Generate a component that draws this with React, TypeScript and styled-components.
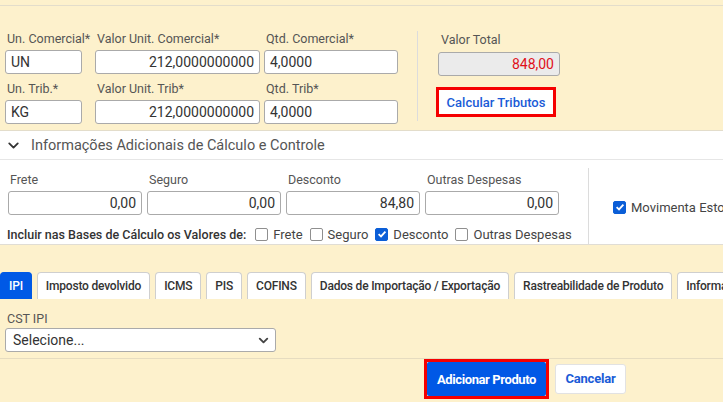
import React from "react";
import styled, { createGlobalStyle } from "styled-components";
import { ChevronDown } from "lucide-react";

const GlobalStyle = createGlobalStyle`
  body {
    margin: 0;
    font-family: Roboto, "Liberation Sans", Arial, sans-serif;
    background: #fdf1cc;
    overflow: hidden;
  }
  * { box-sizing: border-box; }
`;

const Page = styled.div`
  width: 723px;
  height: 402px;
  overflow: hidden;
  background: #fdf1cc;
  padding-top: 5px;
`;

const TopSection = styled.div`
  display: flex;
  border-top: 1px solid #e3ddcb;
  padding: 24px 0 6px 5px;
`;

const FieldGrid = styled.div<{ $cols: string; $gap?: number }>`
  display: grid;
  grid-template-columns: ${(p) => p.$cols};
  column-gap: ${(p) => p.$gap ?? 0}px;
  row-gap: 6px;
`;

const Field = styled.div`
  display: flex;
  flex-direction: column;
`;

const Label = styled.label`
  font-size: 12.5px;
  line-height: 18px;
  color: #555;
  padding-left: 2px;
  margin-bottom: 2px;
  white-space: nowrap;
`;

const Input = styled.div<{ $w?: number; $right?: boolean; $readonly?: boolean }>`
  width: ${(p) => (p.$w ? `${p.$w}px` : "100%")};
  height: 24px;
  border: 1px solid #aaa;
  border-radius: 3px;
  background: ${(p) => (p.$readonly ? "#ebebeb" : "#fff")};
  color: ${(p) => (p.$readonly ? "#e0101a" : "#333")};
  font-size: 14px;
  line-height: 22px;
  padding: 0 5px;
  text-align: ${(p) => (p.$right ? "right" : "left")};
  white-space: nowrap;
  overflow: hidden;
`;

const VLine = styled.div<{ $ml: number; $h: number; $mt: number }>`
  width: 1px;
  background: #dcdcdc;
  margin-left: ${(p) => p.$ml}px;
  margin-top: ${(p) => p.$mt}px;
  height: ${(p) => p.$h}px;
  flex-shrink: 0;
`;

const TotalBlock = styled.div`
  display: flex;
  flex-direction: column;
  align-items: flex-start;
  padding-left: 20px;
`;

const TotalLabel = styled(Label)`
  margin-top: 1px;
  padding-left: 3px;
  margin-bottom: 3px;
`;

const Highlight = styled.div<{ $ml?: number; $mt?: number }>`
  border: 3px solid #f50000;
  margin-left: ${(p) => p.$ml ?? 0}px;
  margin-top: ${(p) => p.$mt ?? 0}px;
  display: flex;
`;

const LinkButton = styled.button`
  border: none;
  background: #fff;
  color: #1a5bd7;
  font-family: inherit;
  font-size: 13px;
  font-weight: 500;
  height: 24px;
  width: 114px;
  padding: 0;
`;

const WhiteSection = styled.div`
  background: #fff;
  border-top: 1px solid #e3ddcb;
  border-bottom: 1px solid #e0ddd5;
  width: 760px;
`;

const SectionHeader = styled.div`
  height: 29px;
  display: flex;
  align-items: center;
  gap: 9px;
  padding-left: 5px;
  font-size: 14.5px;
  color: #555;
  border-bottom: 1px solid #e6e6e6;
`;

const SectionBody = styled.div`
  display: flex;
`;

const CalcArea = styled.div`
  flex: 0 0 559px;
  min-width: 0;
  padding: 11px 0 1px 8px;
`;

const CheckRow = styled.div`
  display: flex;
  align-items: center;
  height: 18px;
  margin: 10px 0 0 -1px;
  white-space: nowrap;
`;

const CheckTitle = styled.span`
  color: #333;
  font-size: 12.5px;
  font-weight: 500;
  margin-right: 9px;
`;

const CheckItem = styled.span`
  display: inline-flex;
  align-items: center;
  gap: 5px;
  margin-right: 7px;
  color: #444;
  font-size: 13px;
  white-space: nowrap;
`;

const Box = styled.span<{ $checked?: boolean }>`
  width: 13px;
  height: 13px;
  border-radius: 2px;
  border: 1px solid ${(p) => (p.$checked ? "#0b5ed7" : "#8f8f8f")};
  background: ${(p) => (p.$checked ? "#0b5ed7" : "#fff")};
  display: inline-flex;
  align-items: center;
  justify-content: center;
`;

const StockArea = styled.div`
  display: flex;
  align-items: center;
  padding-left: 24px;
  padding-top: 10px;
`;

const Tabs = styled.div`
  display: flex;
  gap: 5px;
  margin-top: 27px;
  white-space: nowrap;
`;

const Tab = styled.div<{ $active?: boolean }>`
  height: 27px;
  padding: 0 8px;
  display: flex;
  align-items: center;
  flex-shrink: 0;
  font-size: 12px;
  font-weight: 500;
  letter-spacing: -0.2px;
  border-radius: 4px 4px 0 0;
  border: 1px solid ${(p) => (p.$active ? "#0059e6" : "#cfcfcf")};
  border-bottom: none;
  background: ${(p) => (p.$active ? "#0059e6" : "#fff")};
  color: ${(p) => (p.$active ? "#fff" : "#333")};
`;

const TabPanel = styled.div`
  padding: 9px 0 6px 5px;
  border-bottom: 1px solid #e6dcc0;
`;

const Select = styled.div`
  width: 271px;
  height: 24px;
  border: 1px solid #aaa;
  border-radius: 3px;
  background: #fff;
  display: flex;
  align-items: center;
  justify-content: space-between;
  padding: 0 4px 0 7px;
  font-size: 14px;
  color: #333;
`;

const Actions = styled.div`
  display: flex;
  align-items: center;
  gap: 6px;
  padding-left: 424px;
`;

const PrimaryButton = styled.button`
  width: 119px;
  height: 34px;
  border: none;
  border-radius: 2px;
  background: #0058e6;
  color: #fff;
  font-family: inherit;
  font-size: 13px;
  font-weight: 700;
  letter-spacing: -0.4px;
  padding: 0;
`;

const SecondaryButton = styled.button`
  width: 71px;
  height: 30px;
  border: 1px solid #e2e2e2;
  border-radius: 3px;
  background: #fff;
  color: #1a5bd7;
  font-family: inherit;
  font-size: 13px;
  font-weight: 700;
  letter-spacing: -0.2px;
  padding: 0;
  margin-top: -1px;
`;

function Check({ checked }: { checked?: boolean }) {
  return (
    <Box $checked={checked}>
      {checked && (
        <svg width="10" height="10" viewBox="0 0 10 10">
          <path d="M1.6 5.2 L4 7.4 L8.4 2.6" stroke="#fff" strokeWidth="1.8" fill="none" />
        </svg>
      )}
    </Box>
  );
}

const tabs = [
  "IPI",
  "Imposto devolvido",
  "ICMS",
  "PIS",
  "COFINS",
  "Dados de Importação / Exportação",
  "Rastreabilidade de Produto",
  "Informações Adicionais",
];

export default function App() {
  return (
    <Page>
      <GlobalStyle />
      <TopSection>
        <FieldGrid $cols="90px 169px 134px">
          <Field>
            <Label>Un. Comercial*</Label>
            <Input $w={77}>UN</Input>
          </Field>
          <Field>
            <Label>Valor Unit. Comercial*</Label>
            <Input $w={165} $right>212,0000000000</Input>
          </Field>
          <Field>
            <Label>Qtd. Comercial*</Label>
            <Input>4,0000</Input>
          </Field>
          <Field>
            <Label>Un. Trib.*</Label>
            <Input $w={77}>KG</Input>
          </Field>
          <Field>
            <Label>Valor Unit. Trib*</Label>
            <Input $w={165} $right>212,0000000000</Input>
          </Field>
          <Field>
            <Label>Qtd. Trib*</Label>
            <Input>4,0000</Input>
          </Field>
        </FieldGrid>
        <VLine $ml={19} $mt={1} $h={90} />
        <TotalBlock>
          <TotalLabel>Valor Total</TotalLabel>
          <Input $w={122} $right $readonly>848,00</Input>
          <Highlight $ml={-2} $mt={11}>
            <LinkButton>Calcular Tributos</LinkButton>
          </Highlight>
        </TotalBlock>
      </TopSection>

      <WhiteSection>
        <SectionHeader>
          <ChevronDown size={17} strokeWidth={2.6} color="#333" />
          Informações Adicionais de Cálculo e Controle
        </SectionHeader>
        <SectionBody>
          <CalcArea>
            <FieldGrid $cols="134px 134px 134px 134px" $gap={5}>
              <Field>
                <Label>Frete</Label>
                <Input $right>0,00</Input>
              </Field>
              <Field>
                <Label>Seguro</Label>
                <Input $right>0,00</Input>
              </Field>
              <Field>
                <Label>Desconto</Label>
                <Input $right>84,80</Input>
              </Field>
              <Field>
                <Label>Outras Despesas</Label>
                <Input $right>0,00</Input>
              </Field>
            </FieldGrid>
            <CheckRow>
              <CheckTitle>Incluir nas Bases de Cálculo os Valores de:</CheckTitle>
              <CheckItem>
                <Check />
                Frete
              </CheckItem>
              <CheckItem>
                <Check />
                Seguro
              </CheckItem>
              <CheckItem>
                <Check checked />
                Desconto
              </CheckItem>
              <CheckItem>
                <Check />
                Outras Despesas
              </CheckItem>
            </CheckRow>
          </CalcArea>
          <VLine $ml={29} $mt={8} $h={76} />
          <StockArea>
            <CheckItem>
              <Check checked />
              Movimenta Estoque
            </CheckItem>
          </StockArea>
        </SectionBody>
      </WhiteSection>

      <Tabs>
        {tabs.map((t, i) => (
          <Tab key={t} $active={i === 0}>
            {t}
          </Tab>
        ))}
      </Tabs>
      <TabPanel>
        <Label>CST IPI</Label>
        <Select>
          Selecione...
          <ChevronDown size={15} strokeWidth={3} color="#444" />
        </Select>
      </TabPanel>

      <Actions>
        <Highlight>
          <PrimaryButton>Adicionar Produto</PrimaryButton>
        </Highlight>
        <SecondaryButton>Cancelar</SecondaryButton>
      </Actions>
    </Page>
  );
}
